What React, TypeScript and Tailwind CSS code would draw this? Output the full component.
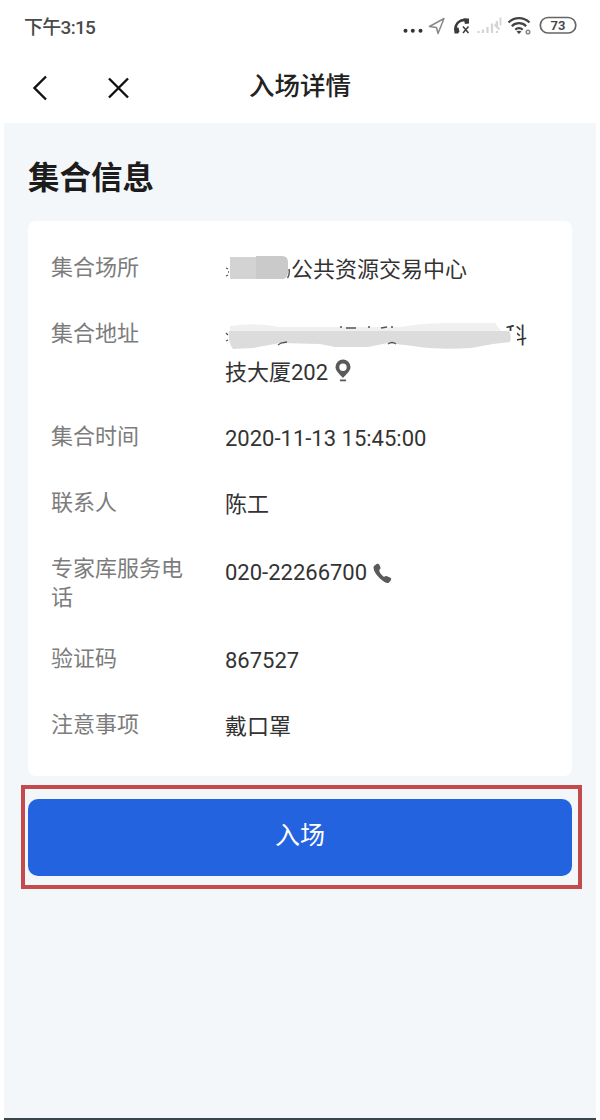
import type { ReactNode } from "react";

function StatusBar() {
  return (
    <div className="flex h-[52px] items-center justify-between pl-6 pr-[23px] pt-0.5 text-[#4a4a4a]">
      <span className="text-[19px] font-medium leading-none tracking-[-0.7px]">下午3:15</span>
      <svg width="174" height="22" viewBox="0 0 174 22" fill="none">
        <g fill="#333">
          <circle cx="2.5" cy="14.8" r="2" />
          <circle cx="9.8" cy="14.8" r="2" />
          <circle cx="17.5" cy="14.8" r="2" />
        </g>
        <path d="M26.5 10.5 41 2.5 35 17.5 33.5 11.5Z" stroke="#888" strokeWidth="1.5" strokeLinejoin="round" />
        <path d="M65.500 4.500C57 2 51.500 8 52.800 14.500" stroke="#3b3b3b" strokeWidth="2.600" />
        <path d="M60.500 2.500h5.500v5l-4 .5Zm-9.500 9.500 4.500-.5 1 4-1.500 2h-3.500Z" fill="#3b3b3b" />
        <path d="m60 10.500 5.500 6.500m0-6.500-5.500 6.500" stroke="#3b3b3b" strokeWidth="1.500" />
        <path d="M75.500 17v-2m4.500 2v-3.500m4.500 3.500v-6m4.500 6V7.500m5 9.500v-2m0-3V5" stroke="#d4d4d4" strokeWidth="2.200" />
        <path d="M97.500 1.500v8m-6-1 5 5m-3-7v4" stroke="#d4d4d4" strokeWidth="1.800" />
        <g stroke="#444" strokeWidth="2.200">
          <path d="M105.500 6.500c6-5.800 15-5.800 21 0" />
          <path d="M108.800 10.200c4-4 10.400-4 14.400 0" />
          <path d="M112.300 13.700c2-2 5.400-2 7.400 0" />
        </g>
        <path d="m113.500 15.500 2.500 2.500 2.500-2.500q-2.500-1.500-5 0Z" fill="#444" />
        <circle cx="125" cy="16" r="1.800" stroke="#888" strokeWidth="1.500" />
        <rect x="137.300" y="1.500" width="35.500" height="15.500" rx="7.700" stroke="#666" strokeWidth="1.700" />
        <text x="155" y="14" textAnchor="middle" fontSize="13" fontWeight="600" fill="#444">
          73
        </text>
      </svg>
    </div>
  );
}

function NavBar() {
  return (
    <header className="grid h-[71px] grid-cols-[200px_1fr_200px] items-center">
      <div className="flex items-center pl-8">
        <svg width="16" height="26" viewBox="0 0 16 26" fill="none" stroke="#111" strokeWidth="2.400">
          <path d="M14 1.500 2.500 13 14 24.500" />
        </svg>
        <svg className="ml-[60px]" width="21" height="22" viewBox="0 0 21 22" fill="none" stroke="#111" strokeWidth="2.400">
          <path d="m1 1.500 19 19m0-19-19 19" />
        </svg>
      </div>
      <h1 className="pb-px text-center text-[25.500px] font-medium leading-none text-[#222]">入场详情</h1>
    </header>
  );
}

function InfoRow({ label, children }: { label: string; children: ReactNode }) {
  return (
    <div className="mb-[30px] flex items-start">
      <dt className="w-[174px] shrink-0 pr-10 pt-px pb-px text-[22px] leading-[29px] text-[#7c7c7c]">{label}</dt>
      <dd className="flex-1 text-[22px] leading-9 text-[#333]">{children}</dd>
    </div>
  );
}

function VenueMask() {
  return (
    <svg className="absolute left-0 top-0 h-9 w-[66px]" viewBox="0 0 66 36" fill="none">
      <path d="M5 5h26v22H5Z" fill="#d3d3d3" />
      <path d="M31 4h26q6 0 6 6v11q-1 6-6 6H31Z" fill="#cacaca" />
      <path d="m1 16 2 1m-2 7 2-1m0-3h1" stroke="#555" strokeWidth="1.300" />
      <path d="M64 17q1 5-1.500 9" stroke="#555" strokeWidth="1.500" />
    </svg>
  );
}

function AddressMask() {
  return (
    <svg className="absolute left-0 top-0 h-[37px] w-[305px]" viewBox="0 0 305 37" fill="none">
      <path d="M280 13h12v18h-12Z" fill="#fff" />
      <path d="M280 28h24v6h-24Z" fill="#fff" />
      <path d="M5 8Q28 4 55 9h120Q198 5 225 5h45l6 8H5Z" fill="#f0f0f0" />
      <path
        d="M4 13H284q3 5 1 11l-17 2-22 4q-34 2-58-2l-25-3-20 4H110L95 26 55 25 28 30 8 31Q3 25 4 13Z"
        fill="#dcdcdc"
      />
      <g stroke="#555" strokeWidth="1.300">
        <path d="m1 15 2 2m-2 6 2-1M115 9h2m4 1h10m12-1h2m11 1 6-1m4 0h2" />
        <path d="m53 27 3-2 6-1m101 2q4-3 8 0" />
      </g>
    </svg>
  );
}

function PinIcon() {
  return (
    <svg className="ml-[7px] mt-1" width="16" height="24" viewBox="0 0 16 24" fill="#5a5a5a">
      <path
        fillRule="evenodd"
        d="M8 .5a7.500 7.500 0 0 1 7.500 7.500c0 4-4 7-7.500 11C4.500 15 .5 12 .5 8A7.500 7.500 0 0 1 8 .5Zm0 4a3.700 3.700 0 1 0 0 7.400 3.700 3.700 0 0 0 0-7.400Z"
      />
      <path d="M5 20.500h6v1.800H5z" />
    </svg>
  );
}

function PhoneIcon() {
  return (
    <svg className="ml-1.5" width="19" height="21" viewBox="0 0 19 21" fill="#5a5a5a">
      <path d="M1 3 4 .8q1.500-.5 2.200.8l1.300 3Q8 6 6.300 6.800 6 10 11 14q1.500-1.500 3-.8l3.500 1.500q1.500 1 .4 2.500L16 19.500q-2 1.500-6-1.500Q1 11 .5 5 .4 4 1 3Z" />
    </svg>
  );
}

export default function App() {
  return (
    <div className="flex h-[1120px] w-[600px] flex-col overflow-hidden bg-white px-1 font-[Roboto,'Noto_Sans_CJK_SC',sans-serif]">
      <div className="-mx-1">
        <StatusBar />
        <NavBar />
      </div>
      <main className="flex-1 border-b-2 border-[#3a464b] bg-[#f3f7fa] px-6 pt-10">
        <h2 className="text-[31.500px] font-bold leading-8 text-[#1c1c1c]">集合信息</h2>
        <dl className="mt-[26px] h-[555px] rounded-lg bg-white px-[23px] pt-[31px]">
          <InfoRow label="集合场所">
            <div className="relative pl-[66px]">
              <VenueMask />
              公共资源交易中心
            </div>
          </InfoRow>
          <InfoRow label="集合地址">
            <div className="relative h-[37px] pl-[280px]">
              科
              <AddressMask />
            </div>
            <div className="flex items-start">
              技大厦202
              <PinIcon />
            </div>
          </InfoRow>
          <InfoRow label="集合时间">2020-11-13 15:45:00</InfoRow>
          <InfoRow label="联系人">陈工</InfoRow>
          <InfoRow label="专家库服务电话">
            <div className="flex items-center pt-0.5">
              020-22266700
              <PhoneIcon />
            </div>
          </InfoRow>
          <InfoRow label="验证码">867527</InfoRow>
          <InfoRow label="注意事项">戴口罩</InfoRow>
        </dl>
        <div className="-ml-[7px] -mr-[10px] mt-[9px] h-[104px] border-4 border-[#c34a4d] pl-[3px] pr-1.5 pt-2.5">
          <button className="h-[77px] w-full rounded-[10px] bg-[#2463e0] pb-[3px] text-[25px] text-white">入场</button>
        </div>
      </main>
    </div>
  );
}
